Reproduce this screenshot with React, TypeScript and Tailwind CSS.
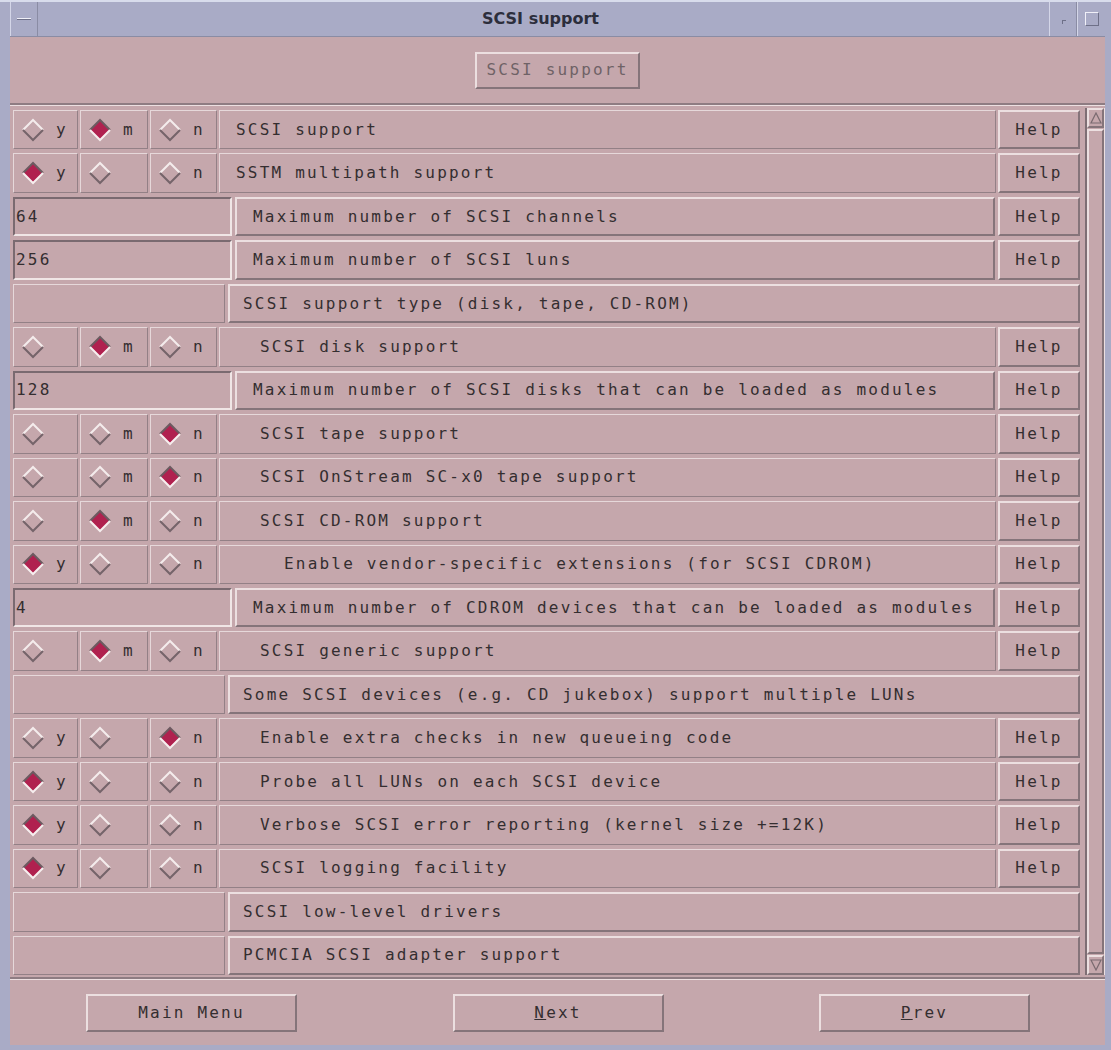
import React from "react";

type Tri = { kind: "tri"; sel: "y" | "m" | "n"; show: [boolean, boolean, boolean]; label: string; indent: number };
type Num = { kind: "num"; value: string; label: string };
type Menu = { kind: "menu"; label: string };
type Row = Tri | Num | Menu;

const rows: Row[] = [
  { kind: "tri", sel: "m", show: [true, true, true], label: "SCSI support", indent: 0 },
  { kind: "tri", sel: "y", show: [true, false, true], label: "SSTM multipath support", indent: 0 },
  { kind: "num", value: "64", label: "Maximum number of SCSI channels" },
  { kind: "num", value: "256", label: "Maximum number of SCSI luns" },
  { kind: "menu", label: "SCSI support type (disk, tape, CD-ROM)" },
  { kind: "tri", sel: "m", show: [false, true, true], label: "SCSI disk support", indent: 1 },
  { kind: "num", value: "128", label: "Maximum number of SCSI disks that can be loaded as modules" },
  { kind: "tri", sel: "n", show: [false, true, true], label: "SCSI tape support", indent: 1 },
  { kind: "tri", sel: "n", show: [false, true, true], label: "SCSI OnStream SC-x0 tape support", indent: 1 },
  { kind: "tri", sel: "m", show: [false, true, true], label: "SCSI CD-ROM support", indent: 1 },
  { kind: "tri", sel: "y", show: [true, false, true], label: "Enable vendor-specific extensions (for SCSI CDROM)", indent: 2 },
  { kind: "num", value: "4", label: "Maximum number of CDROM devices that can be loaded as modules" },
  { kind: "tri", sel: "m", show: [false, true, true], label: "SCSI generic support", indent: 1 },
  { kind: "menu", label: "Some SCSI devices (e.g. CD jukebox) support multiple LUNs" },
  { kind: "tri", sel: "n", show: [true, false, true], label: "Enable extra checks in new queueing code", indent: 1 },
  { kind: "tri", sel: "y", show: [true, false, true], label: "Probe all LUNs on each SCSI device", indent: 1 },
  { kind: "tri", sel: "y", show: [true, false, true], label: "Verbose SCSI error reporting (kernel size +=12K)", indent: 1 },
  { kind: "tri", sel: "y", show: [true, false, true], label: "SCSI logging facility", indent: 1 },
  { kind: "menu", label: "SCSI low-level drivers" },
  { kind: "menu", label: "PCMCIA SCSI adapter support" },
];

const monoBase = "font-['DejaVu_Sans_Mono','Liberation_Mono',monospace] text-[16px] tracking-[2.2px]";
const mono = `${monoBase} text-[#342e30]`;
const raised =
  "border-t-2 border-l-2 border-b-2 border-r-2 border-t-[#ecdfe0] border-l-[#ecdfe0] border-b-[#85747a] border-r-[#85747a]";
const flat =
  "border-t border-l border-b border-r border-t-[#e6d8da] border-l-[#e6d8da] border-b-[#938086] border-r-[#938086]";
const sunken =
  "border-t-2 border-l-2 border-b-2 border-r-2 border-t-[#7a6a70] border-l-[#7a6a70] border-b-[#f0e6e6] border-r-[#f0e6e6]";

function Diamond({ on }: { on: boolean }) {
  return (
    <svg width="24" height="24" viewBox="0 0 24 24" className="shrink-0">
      {on && <polygon points="12,2 22,12 12,22 2,12" fill="#b0214f" />}
      <polyline
        points="2,12 12,2 22,12"
        fill="none"
        stroke={on ? "#6c5a60" : "#f4ecec"}
        strokeWidth="2"
      />
      <polyline
        points="2,12 12,22 22,12"
        fill="none"
        stroke={on ? "#f6eeee" : "#75646a"}
        strokeWidth="2"
      />
    </svg>
  );
}

function RadioCell({ on, letter, show, w }: { on: boolean; letter: string; show: boolean; w: string }) {
  return (
    <div className={`${flat} ${w} h-full flex items-center pl-[7px] gap-[11px] shrink-0`}>
      <Diamond on={on} />
      <span className={`${mono} ${show ? "" : "opacity-0"}`}>{letter}</span>
    </div>
  );
}

function HelpButton() {
  return (
    <div className={`${raised} w-[82px] h-full shrink-0 flex items-center justify-center ${mono} tracking-[1.6px]`}>
      Help
    </div>
  );
}

function RowView({ row }: { row: Row }) {
  if (row.kind === "tri") {
    const pad = row.indent === 0 ? "pl-[16px]" : row.indent === 1 ? "pl-[40px]" : "pl-[64px]";
    return (
      <div className="flex h-[43.5px] py-[2px] gap-[2px]">
        <RadioCell on={row.sel === "y"} letter="y" show={row.show[0]} w="w-[65px]" />
        <RadioCell on={row.sel === "m"} letter="m" show={row.show[1]} w="w-[68px]" />
        <RadioCell on={row.sel === "n"} letter="n" show={row.show[2]} w="w-[67px]" />
        <div className={`${flat} flex-1 h-full flex items-center ${pad} ${mono} whitespace-nowrap`}>{row.label}</div>
        <HelpButton />
      </div>
    );
  }
  if (row.kind === "num") {
    return (
      <div className="flex h-[43.5px] py-[2px] gap-[3px]">
        <div className={`${sunken} w-[219px] h-full shrink-0 flex items-center pl-[1px] ${mono} tracking-[1px]`}>
          {row.value}
        </div>
        <div className={`${raised} flex-1 h-full flex items-center pl-[16px] ${mono} whitespace-nowrap`}>{row.label}</div>
        <HelpButton />
      </div>
    );
  }
  return (
    <div className="flex h-[43.5px] py-[2px] gap-[3px]">
      <div className={`${flat} w-[212px] h-full shrink-0`} />
      <div className={`${raised} flex-1 h-full flex items-center pl-[13px] ${mono} whitespace-nowrap`}>{row.label}</div>
    </div>
  );
}

function Scrollbar() {
  return (
    <div className="w-[20px] h-full flex flex-col border-l-2 border-l-[#7e6e74] border-r border-r-[#ecdfe0] bg-[#c5a7ac]">
      <div className={`${raised} h-[20px] shrink-0 flex items-center justify-center`}>
        <svg width="12" height="12" viewBox="0 0 12 12">
          <polygon points="6,1 11,11 1,11" fill="none" stroke="#7a6a70" strokeWidth="1.2" />
        </svg>
      </div>
      <div className={`${raised} flex-1 mt-[1px] mb-[1px]`} />
      <div className={`${raised} h-[20px] shrink-0 flex items-center justify-center`}>
        <svg width="12" height="12" viewBox="0 0 12 12">
          <polygon points="1,1 11,1 6,11" fill="none" stroke="#7a6a70" strokeWidth="1.2" />
        </svg>
      </div>
    </div>
  );
}

function BottomButton({ children }: { children: React.ReactNode }) {
  return (
    <div className={`${raised} w-[211px] h-[38px] flex items-center justify-center ${mono} tracking-[1.4px]`}>
      {children}
    </div>
  );
}

export default function App() {
  return (
    <div className="w-[1111px] h-[1050px] bg-[#a9abc6] flex flex-col pl-[10px] pr-[6px] pb-[5px] border-t-2 border-t-[#d8dcec]">
      {/* title bar */}
      <div className="h-[35px] shrink-0 flex items-stretch border-b border-b-[#8a8ca4]">
        <div className="w-[28px] flex items-center justify-center border-r border-r-[#8a8ca4] border-l border-l-[#d4d6e8]">
          <div className="w-[14px] h-[2px] bg-[#f0f0f8] border-b border-b-[#6e7088]" />
        </div>
        <div className="flex-1 flex items-center justify-center font-['DejaVu_Sans',sans-serif] font-bold text-[16px] text-[#2c2e3c] pr-[6px]">
          SCSI support
        </div>
        <div className="w-[28px] flex items-center justify-center border-l border-l-[#d4d6e8] border-r border-r-[#8a8ca4]">
          <div className="w-[4px] h-[4px] border-t border-l border-t-[#6e7088] border-l-[#6e7088] mt-[6px] ml-[2px]" />
        </div>
        <div className="w-[28px] flex items-center justify-center border-l border-l-[#d4d6e8]">
          <div className="w-[14px] h-[14px] border border-t-[#f0f0f8] border-l-[#f0f0f8] border-b-[#6e7088] border-r-[#6e7088]" />
        </div>
      </div>

      {/* client area */}
      <div className="flex-1 bg-[#c5a7ac] flex flex-col">
        <div className="h-[68px] shrink-0 flex items-center justify-center border-b-2 border-b-[#8e7c82]">
          <div className={`${raised} w-[165px] h-[37px] flex items-center justify-center ${monoBase} tracking-[1.8px] text-[#6f6266]`}>
            SCSI support
          </div>
        </div>
        <div className="h-[874px] shrink-0 flex pl-[3px] pr-[0px] pt-[2px] gap-[5px] border-t border-t-[#ecdfe0] border-b-2 border-b-[#8e7c82]">
          <div className="flex-1 flex flex-col">
            {rows.map((r, i) => (
              <RowView key={i} row={r} />
            ))}
          </div>
          <div className="pb-[2px]">
            <Scrollbar />
          </div>
        </div>
        <div className="flex-1 flex items-center justify-between pl-[76px] pr-[75px] border-t border-t-[#ecdfe0]">
          <BottomButton>Main Menu</BottomButton>
          <BottomButton>
            <span className="underline">N</span>ext
          </BottomButton>
          <BottomButton>
            <span className="underline">P</span>rev
          </BottomButton>
        </div>
      </div>
    </div>
  );
}
